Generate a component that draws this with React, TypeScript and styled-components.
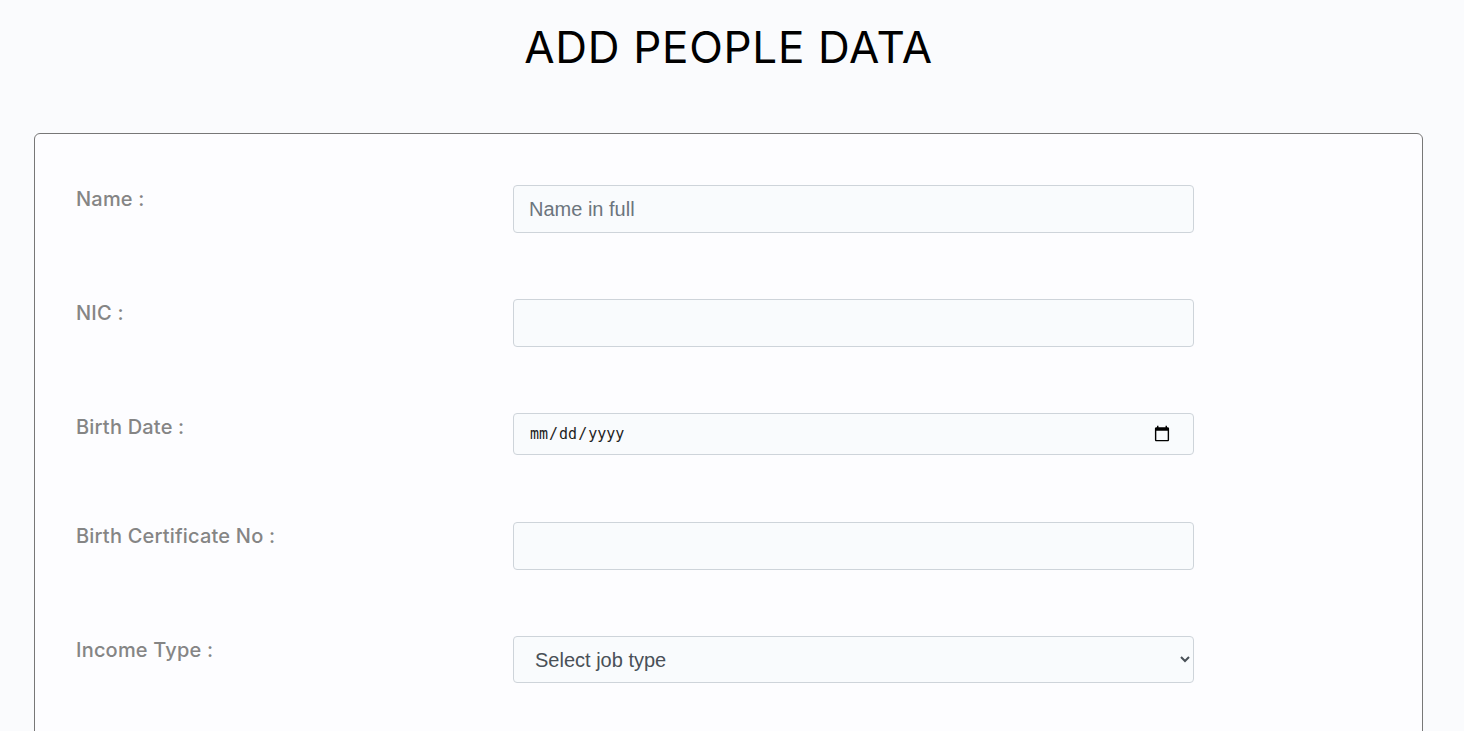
import styled, { createGlobalStyle } from 'styled-components';

const GlobalStyle = createGlobalStyle`
  body {
    margin: 0;
    background-color: #fafbfd;
    font-family: "Liberation Sans", Arial, sans-serif;
  }
`;

const Page = styled.div`
  padding: 0 41px 0 34px;
  height: 731px;
  overflow: hidden;
`;

const Title = styled.h1`
  margin: 0;
  padding: 20px 0 0;
  height: 133px;
  box-sizing: border-box;
  text-align: center;
  font-family: Inter, sans-serif;
  font-weight: 400;
  font-size: 44px;
  letter-spacing: 0.7px;
  color: #000;
`;

const Card = styled.div`
  border: 1px solid #777;
  border-radius: 6px;
  background-color: #fdfdff;
  padding: 51px 41px 40px;
`;

const Row = styled.div<{ $gap?: number }>`
  display: grid;
  grid-template-columns: 437px 681px;
  margin-bottom: ${(p) => p.$gap ?? 66}px;
`;

const Label = styled.label`
  font-family: Inter, sans-serif;
  font-size: 20px;
  font-weight: 500;
  color: #858585;
  line-height: 28px;
  letter-spacing: 0.2px;
`;

const Input = styled.input`
  box-sizing: border-box;
  width: 100%;
  height: 48px;
  padding: 0 15px;
  border: 1px solid #ced4da;
  border-radius: 4px;
  background-color: #f9fbfd;
  font-family: "Liberation Sans", Arial, sans-serif;
  font-size: 20px;
  color: #495057;
  &::placeholder {
    color: #6c757d;
  }
`;

const DateInput = styled(Input)`
  height: 42px;
  padding-right: 20px;
  font-family: "DejaVu Sans Mono", monospace;
  font-size: 15px;
  color: #222;
  &::-webkit-calendar-picker-indicator {
    width: 18px;
    height: 18px;
  }
`;

const Select = styled.select`
  box-sizing: border-box;
  width: 100%;
  height: 47px;
  padding: 0 17px;
  border: 1px solid #ced4da;
  border-radius: 4px;
  background-color: #f9fbfd;
  font-family: "Liberation Sans", Arial, sans-serif;
  font-size: 20px;
  color: #495057;
`;

const App = () => {
  return (
    <>
      <GlobalStyle />
      <Page>
        <Title>ADD PEOPLE DATA</Title>
        <Card>
          <Row>
            <Label>Name :</Label>
            <Input placeholder="Name in full" />
          </Row>
          <Row>
            <Label>NIC :</Label>
            <Input />
          </Row>
          <Row $gap={67}>
            <Label>Birth Date :</Label>
            <DateInput type="date" />
          </Row>
          <Row>
            <Label>Birth Certificate No :</Label>
            <Input />
          </Row>
          <Row>
            <Label>Income Type :</Label>
            <Select defaultValue="">
              <option value="">Select job type</option>
              <option value="gov">Government</option>
              <option value="private">Private</option>
              <option value="self">Self employed</option>
            </Select>
          </Row>
        </Card>
      </Page>
    </>
  );
};

export default App;
